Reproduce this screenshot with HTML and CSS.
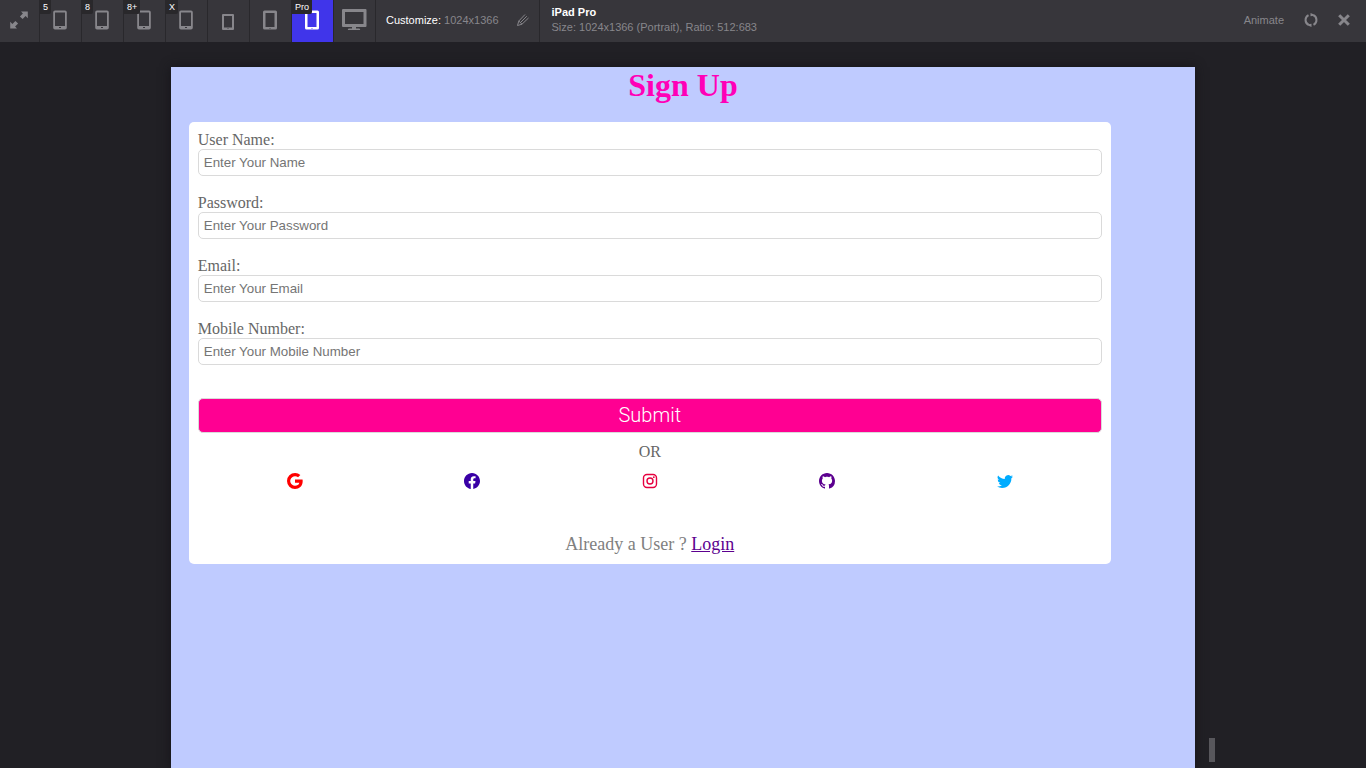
FILE: index.html
```html
<!DOCTYPE html>
<html lang="en">
<head>
<meta charset="utf-8">
<meta name="viewport" content="width=device-width, initial-scale=1">
<title>Sign Up</title>
<link rel="stylesheet" href="styles.css">
</head>
<body>
<svg class="symbols" aria-hidden="true">
  <symbol id="phone" viewBox="0 0 14 20">
    <path fill-rule="evenodd" d="M2 .5h10a1.800 1.800 0 0 1 1.800 1.800v15.400a1.800 1.800 0 0 1-1.800 1.800H2A1.800 1.800 0 0 1 .2 17.700V2.300A1.800 1.800 0 0 1 2 .5zM2 2.500v13.500h10V2.500zM6 17v1h2v-1z"/>
  </symbol>
  <symbol id="tablet" viewBox="0 0 16 20">
    <path fill-rule="evenodd" d="M2.500 .5h11A1.500 1.500 0 0 1 15 2v16a1.500 1.500 0 0 1-1.500 1.500h-11A1.500 1.500 0 0 1 1 18V2A1.500 1.500 0 0 1 2.500 .5zM3.500 3v14h9V3zM7.500 18v.8h1V18z"/>
  </symbol>
</svg>

<header class="toolbar">
  <button class="tool tool-expand" type="button" aria-label="Expand">
    <svg class="icon-expand" viewBox="0 0 18 18"><path d="M11 .5h6.800v6.800l-2.200-2.200-3 3-2.700-2.700 3-3zM7 17.500H.2v-6.800l2.200 2.200 3-3 2.700 2.700-3 3z"/></svg>
  </button>
  <button class="tool" type="button" aria-label="iPhone 5"><span class="badge">5</span><svg class="icon-phone"><use href="#phone"/></svg></button>
  <button class="tool" type="button" aria-label="iPhone 8"><span class="badge">8</span><svg class="icon-phone"><use href="#phone"/></svg></button>
  <button class="tool" type="button" aria-label="iPhone 8+"><span class="badge">8+</span><svg class="icon-phone"><use href="#phone"/></svg></button>
  <button class="tool" type="button" aria-label="iPhone X"><span class="badge">X</span><svg class="icon-phone"><use href="#phone"/></svg></button>
  <button class="tool" type="button" aria-label="Small tablet"><svg class="icon-mini" viewBox="0 0 12 16"><path fill-rule="evenodd" d="M1 0h10a1 1 0 0 1 1 1v14a1 1 0 0 1-1 1H1a1 1 0 0 1-1-1V1a1 1 0 0 1 1-1zM2 2v11.500h8V2zM5.500 14.300v.8h1v-.8z"/></svg></button>
  <button class="tool" type="button" aria-label="iPad"><svg class="icon-tablet"><use href="#tablet"/></svg></button>
  <button class="tool tool-active" type="button" aria-label="iPad Pro"><span class="badge">Pro</span><svg class="icon-tablet"><use href="#tablet"/></svg></button>
  <button class="tool" type="button" aria-label="Desktop"><svg class="icon-desktop" viewBox="0 0 26 22"><path fill-rule="evenodd" d="M2 0h22.500a1 1 0 0 1 1 1v16a1 1 0 0 1-1 1H15v1.500h3a1 1 0 0 1 1 1.500H7a1 1 0 0 1 1-1.500h3V18H2a1 1 0 0 1-1-1V1a1 1 0 0 1 1-1zM4 3v12h18.500V3z"/></svg></button>
  <div class="customize">
    <span><span class="customize-label">Customize:</span> 1024x1366</span>
    <button class="plain" type="button" aria-label="Edit size"><svg class="icon-pencil" viewBox="0 0 14 14"><path d="M1.500 12.500l1.300-4.500L9 1.500M1.500 12.500l4.500-1.300L12.500 5M4.300 9.700l6.500-6.500M2.800 8L6 11.200"/></svg></button>
  </div>
  <div class="device">
    <strong class="device-name">iPad Pro</strong>
    <span>Size: 1024x1366 (Portrait), Ratio: 512:683</span>
  </div>
  <div class="actions">
    <button class="plain" type="button">Animate</button>
    <button class="plain" type="button" aria-label="Rotate"><svg class="icon-rotate" viewBox="0 0 14 14"><path d="M4.500 2.100A5.500 5.500 0 0 0 4.800 12M9.500 11.900A5.500 5.500 0 0 0 9.200 2"/><path class="heads" d="M6.500 0v3.200L9.800 2.800 9.500 1.200zM7.500 14v-3.200L4.200 11.200 4.500 12.800z"/></svg></button>
    <button class="plain" type="button" aria-label="Close"><svg class="icon-close" viewBox="0 0 12 12"><path d="M1.200 1.200l9.600 9.600M10.800 1.200L1.200 10.800"/></svg></button>
  </div>
</header>

<div class="stage">
  <main class="page">
    <h1 class="title">Sign Up</h1>
    <form class="card">
      <div class="field"><label for="name">User Name:</label><input id="name" type="text" placeholder="Enter Your Name"></div>
      <div class="field"><label for="password">Password:</label><input id="password" type="password" placeholder="Enter Your Password"></div>
      <div class="field"><label for="email">Email:</label><input id="email" type="email" placeholder="Enter Your Email"></div>
      <div class="field"><label for="mobile">Mobile Number:</label><input id="mobile" type="tel" placeholder="Enter Your Mobile Number"></div>
      <button class="submit" type="submit">Submit</button>
      <p class="or">OR</p>
      <nav class="social">
        <a class="google" href="#" aria-label="Google"><svg viewBox="0 0 16 16"><path d="M15.545 6.558a9.420 9.420 0 0 1 .139 1.626c0 2.434-.870 4.492-2.384 5.885h.002C11.978 15.292 10.158 16 8 16A8 8 0 1 1 8 0a7.689 7.689 0 0 1 5.352 2.082l-2.284 2.284A4.347 4.347 0 0 0 8 3.166c-2.087 0-3.860 1.408-4.492 3.304a4.792 4.792 0 0 0 0 3.063h.003c.635 1.893 2.405 3.301 4.492 3.301 1.078 0 2.004-.276 2.722-.764h-.003a3.702 3.702 0 0 0 1.599-2.431H8v-3.080h7.545z"/></svg></a>
        <a class="facebook" href="#" aria-label="Facebook"><svg viewBox="0 0 16 16"><path d="M16 8.049c0-4.446-3.582-8.050-8-8.050C3.580 0-.002 3.603-.002 8.050c0 4.017 2.926 7.347 6.750 7.951v-5.625h-2.030V8.050H6.750V6.275c0-2.017 1.195-3.131 3.022-3.131.876 0 1.791.157 1.791.157v1.980h-1.009c-.993 0-1.303.621-1.303 1.258v1.510h2.218l-.354 2.326H9.250V16c3.824-.604 6.750-3.934 6.750-7.951z"/></svg></a>
        <a class="instagram" href="#" aria-label="Instagram"><svg viewBox="0 0 16 16"><g fill="none" stroke="currentColor" stroke-width="1.400"><rect x="1.500" y="1.500" width="13" height="13" rx="3.500"/><circle cx="8" cy="8" r="3"/></g><circle cx="11.800" cy="4.200" r=".9"/></svg></a>
        <a class="github" href="#" aria-label="GitHub"><svg viewBox="0 0 16 16"><path d="M8 0C3.580 0 0 3.580 0 8c0 3.540 2.290 6.530 5.470 7.590.4.070.550-.170.550-.380 0-.190-.010-.820-.010-1.490-2.010.370-2.530-.490-2.690-.940-.090-.230-.480-.940-.820-1.130-.280-.150-.680-.520-.010-.530.630-.010 1.080.580 1.230.820.720 1.210 1.870.870 2.330.660.070-.520.280-.870.510-1.070-1.780-.200-3.640-.890-3.640-3.950 0-.870.310-1.590.820-2.150-.080-.200-.360-1.020.080-2.120 0 0 .670-.210 2.200.820.640-.180 1.320-.270 2-.270s1.360.090 2 .270c1.530-1.040 2.200-.820 2.200-.820.440 1.100.160 1.920.080 2.120.510.560.820 1.270.820 2.150 0 3.070-1.870 3.750-3.650 3.950.290.250.540.730.540 1.480 0 1.070-.010 1.930-.010 2.200 0 .210.150.460.550.380A8.010 8.010 0 0 0 16 8c0-4.420-3.580-8-8-8z"/></svg></a>
        <a class="twitter" href="#" aria-label="Twitter"><svg viewBox="0 0 16 16"><path d="M5.026 15c6.038 0 9.341-5.003 9.341-9.334 0-.140 0-.282-.006-.422A6.685 6.685 0 0 0 16 3.542a6.658 6.658 0 0 1-1.889.518 3.301 3.301 0 0 0 1.447-1.817 6.533 6.533 0 0 1-2.087.793A3.286 3.286 0 0 0 7.875 6.030a9.325 9.325 0 0 1-6.767-3.429 3.289 3.289 0 0 0 1.018 4.382A3.323 3.323 0 0 1 .640 6.575v.045a3.288 3.288 0 0 0 2.632 3.218 3.203 3.203 0 0 1-.865.115 3.230 3.230 0 0 1-.614-.057 3.283 3.283 0 0 0 3.067 2.277A6.588 6.588 0 0 1 .780 13.580a6.320 6.320 0 0 1-.780-.045A9.344 9.344 0 0 0 5.026 15z"/></svg></a>
      </nav>
      <p class="login">Already a User ? <a href="#">Login</a></p>
    </form>
  </main>
  <span class="grip"></span>
</div>
</body>
</html>
```
FILE: styles.css
```css
* { box-sizing: border-box; }

body {
  display: flex;
  flex-direction: column;
  height: 100vh;
  margin: 0;
  overflow: hidden;
  background: #212025;
  font-family: "Liberation Sans", Arial, sans-serif;
}

button { font: inherit; color: inherit; cursor: pointer; }
svg { display: block; fill: currentColor; }
.symbols { position: absolute; width: 0; height: 0; }

.toolbar {
  display: flex;
  flex: none;
  height: 42px;
  background: #37363b;
  color: #87868b;
  font-size: 11px;
}

.tool {
  position: relative;
  display: flex;
  align-items: center;
  justify-content: center;
  width: 42px;
  padding: 0 1px 2px 0;
  border: 0;
  border-right: 1px solid #29282c;
  background: none;
}
.tool-expand { width: 40px; padding-right: 2px; }
.tool-active { background: #4035ea; color: #fff; }

.badge {
  position: absolute;
  top: 0;
  left: 0;
  height: 14px;
  padding: 0 3px;
  border-bottom-right-radius: 2px;
  background: #29282b;
  color: #fff;
  font-size: 9px;
  line-height: 14px;
}

.icon-expand { width: 18px; height: 18px; }
.icon-phone { width: 14px; height: 20px; }
.icon-mini { width: 12px; height: 16px; margin-top: 4px; }
.icon-tablet { width: 16px; height: 20px; }
.icon-desktop { width: 26px; height: 22px; }
.icon-pencil, .icon-rotate { width: 14px; height: 14px; fill: none; stroke: currentColor; }
.icon-rotate { stroke-width: 2; }
.icon-rotate .heads { fill: currentColor; stroke: none; }
.icon-close { width: 12px; height: 12px; stroke: currentColor; stroke-width: 3; overflow: visible; }

.customize {
  display: flex;
  align-items: center;
  gap: 17px;
  padding: 0 9px 2px 10px;
  border-right: 1px solid #29282c;
}
.customize-label { color: #fff; }
.plain { padding: 0; border: 0; background: none; }

.device {
  display: flex;
  flex-direction: column;
  padding: 5px 12px;
  line-height: 15px;
}
.device-name { color: #fff; }

.actions {
  display: flex;
  align-items: center;
  gap: 20px;
  margin-left: auto;
  padding: 0 16px 2px 0;
}

.stage {
  position: relative;
  display: flex;
  flex: 1;
  justify-content: center;
  padding-top: 25px;
}

.page {
  width: 75%;
  background: #bfcbff;
  box-shadow: 0 0 10px #151419;
  font-family: "Liberation Serif", "Times New Roman", serif;
}

.title {
  margin: 0 0 18px;
  color: #ff00b7;
  font-size: 32px;
  line-height: 37px;
  text-align: center;
}

.card {
  display: flex;
  flex-direction: column;
  width: 90%;
  margin-left: 18px;
  padding: 9px;
  border-radius: 5px;
  background: #fff;
  color: #666;
  font-size: 16px;
  line-height: 18px;
}

.field {
  display: flex;
  flex-direction: column;
  margin-bottom: 18px;
}
.field input {
  height: 27px;
  padding: 0 5px;
  border: 1px solid #dadada;
  border-radius: 5px;
  background: #fff;
  font-family: "Liberation Sans", Arial, sans-serif;
}
.field input::placeholder { color: #757575; }

.submit {
  height: 35px;
  margin-top: 15px;
  padding: 0 0 2px;
  border: 1px solid #dadada;
  border-radius: 5px;
  background: #ff0092;
  color: #fff;
  font-family: Roboto, "Liberation Sans", sans-serif;
  font-size: 20px;
  font-weight: 300;
}

.or { margin: 10px 0 12px; text-align: center; }

.social {
  display: flex;
  justify-content: space-around;
  padding: 0 8px;
}
.social svg { width: 16px; height: 16px; }
.google { color: #f00; }
.facebook { color: #3900a6; }
.instagram { color: #e6003f; }
.github { color: #5c008f; }
.twitter { color: #00acff; }

.login {
  margin: 45px 0 0;
  color: #808080;
  font-size: 18px;
  line-height: 21px;
  text-align: center;
}
.login a { color: #5c008f; }

.grip {
  position: absolute;
  right: 151px;
  bottom: 6px;
  width: 6px;
  height: 24px;
  background: #58575c;
}
```
